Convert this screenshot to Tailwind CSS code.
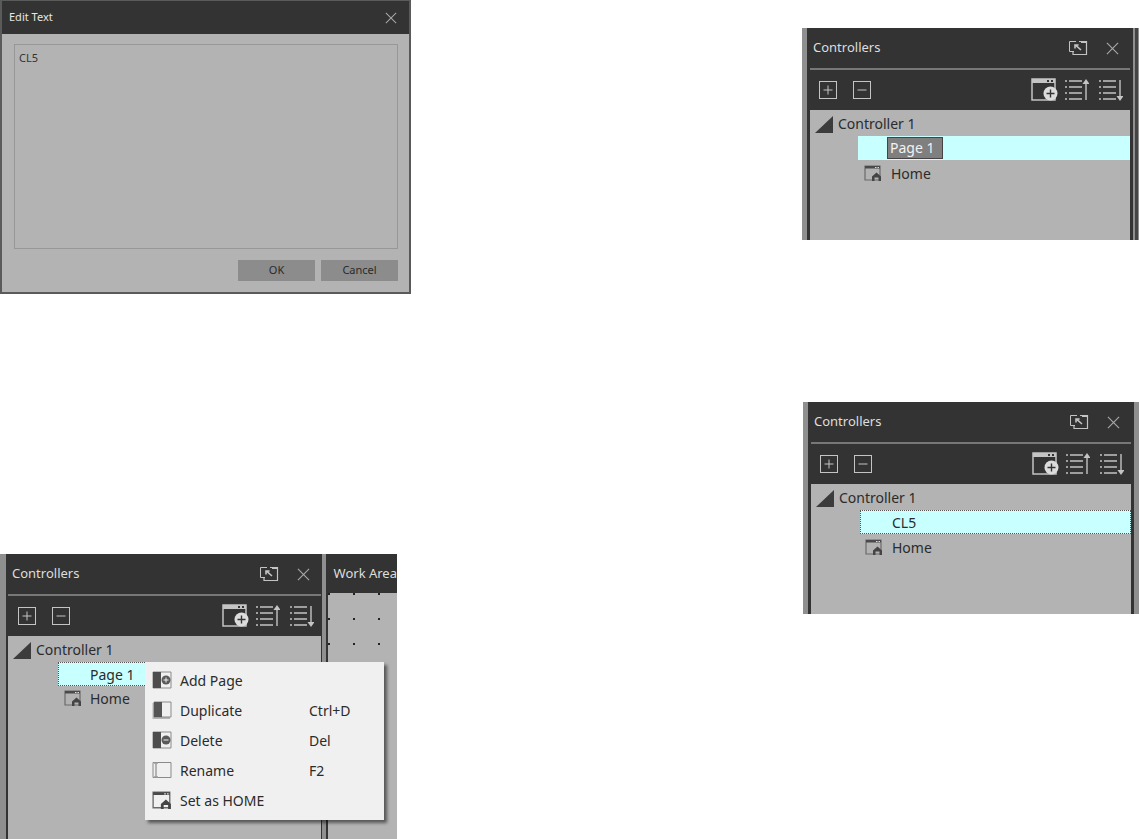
<!DOCTYPE html>
<html lang="en">
<head>
<meta charset="UTF-8">
<title>Controllers</title>
<script src="https://cdn.jsdelivr.net/npm/@tailwindcss/browser@4"></script>
</head>
<body class="bg-white overflow-hidden font-['Noto_Sans',sans-serif]">
<svg class="hidden">
  <symbol id="i-export" viewBox="0 0 20 16" fill="none" stroke="#c4c4c4">
    <path d="M6 11.5H1.5V1.5H8" />
    <path d="M11 1.5H18.5V14.5H5V12" stroke-width="1.2" />
    <path d="M13 1v2h5V1z" fill="#c4c4c4" stroke="none" />
    <path d="M13 10L7.5 5.2M7 8.5V5h3.6" stroke-width="1.6" />
  </symbol>
  <symbol id="i-close" viewBox="0 0 14 14" fill="none" stroke="#a8a8a8" stroke-width="1.2">
    <path d="M1 1L13 13M13 1L1 13" />
  </symbol>
  <symbol id="i-plus" viewBox="0 0 18 18" fill="none" stroke="#c4c4c4">
    <rect x="0.5" y="0.5" width="17" height="17" />
    <path d="M4.5 9H13.5M9 4.5V13.5" />
  </symbol>
  <symbol id="i-minus" viewBox="0 0 18 18" fill="none" stroke="#c4c4c4">
    <rect x="0.5" y="0.5" width="17" height="17" />
    <path d="M4.5 9H13.5" />
  </symbol>
  <symbol id="i-addpage" viewBox="0 0 27 23">
    <path d="M1 1H24V22H1z" fill="none" stroke="#c4c4c4" stroke-width="1.5" />
    <path d="M1 1H24V5H1z" fill="#c4c4c4" />
    <path d="M16 2h2v2h-2zM20 2h2v2h-2z" fill="#333" />
    <circle cx="19.5" cy="15.5" r="7" fill="#dcdcdc" />
    <path d="M15.5 15.5H23.5M19.5 11.5V19.5" stroke="#333" stroke-width="1.4" />
  </symbol>
  <symbol id="i-listup" viewBox="0 0 24 22" fill="none" stroke="#c4c4c4" stroke-width="1.4">
    <path d="M0 2H2M4 2H17M0 8H2M4 8H17M0 14H2M4 14H17M0 20H2M4 20H17" />
    <path d="M21 21V4" />
    <path d="M21 0L24.5 5H17.5z" fill="#c4c4c4" stroke="none" />
  </symbol>
  <symbol id="i-listdown" viewBox="0 0 24 22" fill="none" stroke="#c4c4c4" stroke-width="1.4">
    <path d="M0 2H2M4 2H17M0 8H2M4 8H17M0 14H2M4 14H17M0 20H2M4 20H17" />
    <path d="M21 1V18" />
    <path d="M21 22L24.5 17H17.5z" fill="#c4c4c4" stroke="none" />
  </symbol>
  <symbol id="i-home" viewBox="0 0 18 16">
    <path d="M1 1H16V15H1z" fill="none" stroke="#6a6a6a" stroke-width="1.2" />
    <path d="M1 1H16V3.5H1z" fill="#4a4a4a" />
    <path d="M11 2h1.5v1H11zM13.5 2H15v1h-1.5z" fill="#ddd" />
    <path d="M8 16V11.5L12.5 7.5L17 11.5V16H14.5V12.5H10.5V16z" fill="#444" />
  </symbol>
  <symbol id="i-add" viewBox="0 0 20 18">
    <path d="M1 1H19V17H1z" fill="none" stroke="#8a8a8a" />
    <path d="M1 1H9V17H1z" fill="#4d4d4d" />
    <circle cx="14" cy="9" r="4.5" fill="#5a5a5a" />
    <path d="M11.5 9H16.5M14 6.5V11.5" stroke="#eee" />
  </symbol>
  <symbol id="i-dup" viewBox="0 0 20 18">
    <path d="M1.5 2V17H18" fill="none" stroke="#b5b5b5" stroke-width="2" />
    <path d="M2 1H19V16H2z" fill="none" stroke="#8a8a8a" />
    <path d="M2 1H10V16H2z" fill="#555" />
  </symbol>
  <symbol id="i-del" viewBox="0 0 20 18">
    <path d="M1 1H19V17H1z" fill="none" stroke="#8a8a8a" />
    <path d="M1 1H9V17H1z" fill="#4d4d4d" />
    <circle cx="14" cy="9" r="4.5" fill="#5a5a5a" />
    <path d="M11.5 9H16.5" stroke="#eee" />
  </symbol>
  <symbol id="i-rename" viewBox="0 0 20 18" fill="none">
    <path d="M1 1.5H19V16.5H1z" stroke="#8a8a8a" />
    <path d="M2 2H6M2 16H6M4 2V16" stroke="#9a9a9a" stroke-width="1.4" />
  </symbol>
</svg>

<!-- Edit Text dialog -->
<div class="absolute left-0 top-0 w-[411px] h-[294px] flex flex-col border-2 border-t border-[#5a5a5a] bg-[#b3b3b3]">
  <div class="h-[33px] shrink-0 bg-[#333333] flex items-center justify-between pl-[7px] pr-[12px]">
    <span class="text-[11px] text-[#e6e6e6]">Edit Text</span>
    <svg class="w-[12px] h-[12px]"><use href="#i-close" /></svg>
  </div>
  <div class="flex-1 flex flex-col pt-[10px] pb-[11px] pl-[12px] pr-[11px]">
    <div class="flex-1 border border-[#979797] px-[4px] pt-[4px] text-[11px] leading-[18px] text-[#333]">CL5</div>
    <div class="flex justify-end gap-[6px] mt-[11px]">
      <button class="w-[77px] h-[21px] bg-[#8c8c8c] text-[11px] text-[#2a2a2a]">OK</button>
      <button class="w-[77px] h-[21px] bg-[#8c8c8c] text-[11px] text-[#2a2a2a]">Cancel</button>
    </div>
  </div>
</div>

<!-- Controllers panel: editing the page name -->
<div class="absolute left-[802px] top-[28px] w-[337px] h-[212px] flex bg-[#8f8f8f]">
  <div class="ml-[5px] w-[326px] flex flex-col bg-[#333333] pl-[3px] pr-[3px]">
    <div class="h-[42px] shrink-0 flex items-center border-b-2 border-[#777] pl-[3px] -mb-px">
      <span class="text-[13px] text-[#dedede]">Controllers</span>
      <svg class="ml-auto w-[20px] h-[16px]"><use href="#i-export" /></svg>
      <svg class="ml-[18px] mr-[11px] w-[13px] h-[13px]"><use href="#i-close" /></svg>
    </div>
    <div class="h-[41px] shrink-0 flex items-center pl-[9px]">
      <svg class="w-[18px] h-[18px]"><use href="#i-plus" /></svg>
      <svg class="ml-[16px] w-[18px] h-[18px]"><use href="#i-minus" /></svg>
      <svg class="ml-auto w-[27px] h-[23px]"><use href="#i-addpage" /></svg>
      <svg class="ml-[7px] w-[24px] h-[22px]"><use href="#i-listup" /></svg>
      <svg class="ml-[10px] mr-[7px] w-[24px] h-[22px]"><use href="#i-listdown" /></svg>
    </div>
    <div class="flex-1 bg-[#b3b3b3] text-[14px] text-[#2b2b2b]">
      <div class="h-[26px] flex items-center pl-[5px]">
        <svg class="w-[18px] h-[17px] mt-[2px]" viewBox="0 0 18 17"><path d="M0 17L18 0V17z" fill="#3c3c3c" /></svg>
        <span class="ml-[5px]">Controller 1</span>
      </div>
      <div class="h-[24px] ml-[48px] bg-[#c8ffff] flex items-center pl-[29px]">
        <span class="h-[22px] w-[56px] bg-[#7f7f7f] border border-[#444] text-[#f2f2f2] leading-[20px] pl-[2px]">Page 1</span>
      </div>
      <div class="h-[24px] mt-px flex items-center pl-[54px]">
        <svg class="w-[18px] h-[16px]"><use href="#i-home" /></svg>
        <span class="ml-[9px]">Home</span>
      </div>
    </div>
  </div>
  <div class="ml-[2px] w-[3px] bg-[#444]"></div>
</div>

<!-- Controllers panel: renamed to CL5 -->
<div class="absolute left-[803px] top-[402px] w-[336px] h-[212px] flex bg-[#8f8f8f]">
  <div class="ml-[5px] w-[326px] flex flex-col bg-[#333333] pl-[3px] pr-[3px]">
    <div class="h-[42px] shrink-0 flex items-center border-b-2 border-[#777] pl-[3px] -mb-px">
      <span class="text-[13px] text-[#dedede]">Controllers</span>
      <svg class="ml-auto w-[20px] h-[16px]"><use href="#i-export" /></svg>
      <svg class="ml-[18px] mr-[11px] w-[13px] h-[13px]"><use href="#i-close" /></svg>
    </div>
    <div class="h-[41px] shrink-0 flex items-center pl-[9px]">
      <svg class="w-[18px] h-[18px]"><use href="#i-plus" /></svg>
      <svg class="ml-[16px] w-[18px] h-[18px]"><use href="#i-minus" /></svg>
      <svg class="ml-auto w-[27px] h-[23px]"><use href="#i-addpage" /></svg>
      <svg class="ml-[7px] w-[24px] h-[22px]"><use href="#i-listup" /></svg>
      <svg class="ml-[10px] mr-[7px] w-[24px] h-[22px]"><use href="#i-listdown" /></svg>
    </div>
    <div class="flex-1 bg-[#b3b3b3] text-[14px] text-[#2b2b2b]">
      <div class="h-[26px] flex items-center pl-[5px]">
        <svg class="w-[18px] h-[17px] mt-[2px]" viewBox="0 0 18 17"><path d="M0 17L18 0V17z" fill="#3c3c3c" /></svg>
        <span class="ml-[5px]">Controller 1</span>
      </div>
      <div class="h-[24px] ml-[49px] bg-[#c8ffff] border border-dotted border-[#555] flex items-center pl-[31px]">CL5</div>
      <div class="h-[24px] mt-px flex items-center pl-[54px]">
        <svg class="w-[18px] h-[16px]"><use href="#i-home" /></svg>
        <span class="ml-[9px]">Home</span>
      </div>
    </div>
  </div>
</div>

<!-- Controllers panel with context menu, beside the Work Area -->
<div class="absolute left-0 top-[554px] w-[397px] h-[285px] flex bg-[#8f8f8f]">
  <div class="ml-[6px] w-[325px] flex flex-col bg-[#333333] pl-[2px] pr-[1px]">
    <div class="h-[42px] shrink-0 flex items-center border-b-2 border-[#777] pl-[4px] -mb-px">
      <span class="text-[13px] text-[#dedede]">Controllers</span>
      <svg class="ml-auto w-[20px] h-[16px]"><use href="#i-export" /></svg>
      <svg class="ml-[18px] mr-[11px] w-[13px] h-[13px]"><use href="#i-close" /></svg>
    </div>
    <div class="h-[41px] shrink-0 flex items-center pl-[10px]">
      <svg class="w-[18px] h-[18px]"><use href="#i-plus" /></svg>
      <svg class="ml-[16px] w-[18px] h-[18px]"><use href="#i-minus" /></svg>
      <svg class="ml-auto w-[27px] h-[23px]"><use href="#i-addpage" /></svg>
      <svg class="ml-[7px] w-[24px] h-[22px]"><use href="#i-listup" /></svg>
      <svg class="ml-[10px] mr-[7px] w-[24px] h-[22px]"><use href="#i-listdown" /></svg>
    </div>
    <div class="flex-1 bg-[#b3b3b3] text-[14px] text-[#2b2b2b]">
      <div class="h-[26px] flex items-center pl-[5px]">
        <svg class="w-[18px] h-[17px] mt-[2px]" viewBox="0 0 18 17"><path d="M0 17L18 0V17z" fill="#3c3c3c" /></svg>
        <span class="ml-[5px]">Controller 1</span>
      </div>
      <div class="h-[24px] ml-[50px] bg-[#c8ffff] border border-dotted border-[#555] flex items-center pl-[31px]">Page 1</div>
      <div class="h-[24px] flex items-center pl-[56px]">
        <svg class="w-[18px] h-[16px]"><use href="#i-home" /></svg>
        <span class="ml-[8px]">Home</span>
      </div>
    </div>
  </div>
  <div class="ml-[4px] w-[2px] bg-[#333]"></div>
  <div class="flex-1 flex flex-col">
    <div class="h-[39px] shrink-0 bg-[#333333] flex items-center pl-[6px] overflow-hidden whitespace-nowrap">
      <span class="text-[13px] text-[#dedede]">Work Area</span>
    </div>
    <div class="flex-1 bg-[#b3b3b3] bg-[radial-gradient(circle_at_1px_1px,#222_1px,transparent_1px)] bg-[size:25px_25px]"></div>
  </div>
</div>

<!-- Context menu -->
<div class="absolute left-[145px] top-[662px] w-[239px] h-[158px] bg-[#f0f0f0] shadow-[3px_3px_3px_rgba(0,0,0,0.5)] py-[3px] text-[14px] text-[#2b2b2b]">
  <div class="h-[30px] flex items-center pl-[7px]">
    <svg class="w-[20px] h-[18px]"><use href="#i-add" /></svg>
    <span class="ml-[8px] w-[129px]">Add Page</span>
  </div>
  <div class="h-[30px] flex items-center pl-[7px]">
    <svg class="w-[20px] h-[18px]"><use href="#i-dup" /></svg>
    <span class="ml-[8px] w-[129px]">Duplicate</span>
    <span>Ctrl+D</span>
  </div>
  <div class="h-[30px] flex items-center pl-[7px]">
    <svg class="w-[20px] h-[18px]"><use href="#i-del" /></svg>
    <span class="ml-[8px] w-[129px]">Delete</span>
    <span>Del</span>
  </div>
  <div class="h-[30px] flex items-center pl-[7px]">
    <svg class="w-[20px] h-[18px]"><use href="#i-rename" /></svg>
    <span class="ml-[8px] w-[129px]">Rename</span>
    <span>F2</span>
  </div>
  <div class="h-[30px] flex items-center pl-[7px]">
    <svg class="w-[20px] h-[18px]"><use href="#i-home" /></svg>
    <span class="ml-[8px] w-[129px]">Set as HOME</span>
  </div>
</div>
</body>
</html>
